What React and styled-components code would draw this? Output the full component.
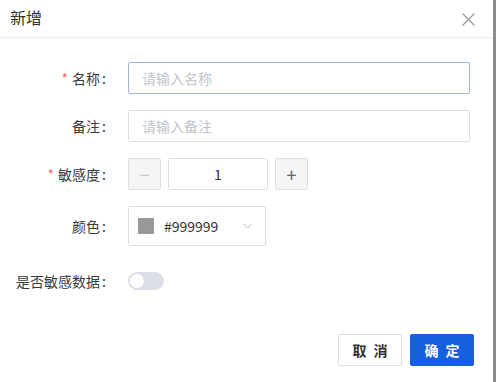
import React from "react";
import styled, { createGlobalStyle } from "styled-components";

const GlobalStyle = createGlobalStyle`
	html, body {
		margin: 0;
		padding: 0;
		background: #8c8c8c;
		font-family: "Noto Sans CJK SC", "Noto Sans", sans-serif;
	}
`;

const Dialog = styled.div`
	width: 493px;
	height: 382px;
	background: #fff;
	display: flex;
	flex-direction: column;
	box-sizing: border-box;
`;

const Header = styled.div`
	height: 38px;
	box-sizing: border-box;
	border-bottom: 1px solid #e8eaef;
	display: flex;
	align-items: center;
	justify-content: space-between;
	padding: 0 18px 0 10px;
`;

const Title = styled.div`
	font-size: 16px;
	color: #303133;
	line-height: 20px;
	margin-top: -4px;
`;

const Close = styled.svg`
	width: 13px;
	height: 13px;
	margin-top: 2px;
`;

const Body = styled.div`
	padding: 24px 23px 0 0;
	display: flex;
	flex-direction: column;
	gap: 16px;
`;

const Row = styled.div`
	display: flex;
	align-items: center;
	margin-top: ${(p) => p.$mt || 0}px;
`;

const Label = styled.label`
	width: 107px;
	flex: none;
	text-align: right;
	font-size: 14px;
	color: #3a3a3a;
	padding-right: 21px;
	white-space: nowrap;
	&::before {
		content: ${(p) => (p.$required ? '"*"' : '""')};
		color: #f56c6c;
		margin-right: 4px;
	}
	&::after {
		content: ":";
		margin-left: 2px;
		margin-right: 1px;
	}
`;

const TextInput = styled.div`
	flex: 1;
	height: 32px;
	box-sizing: border-box;
	border: 1px solid ${(p) => (p.$focus ? "#a3b7dd" : "#dcdfe6")};
	border-radius: 2px;
	display: flex;
	align-items: center;
	padding: 0 13px;
	font-size: 14px;
	color: #c0c4cc;
`;

const Stepper = styled.div`
	display: flex;
	gap: 7px;
`;

const StepButton = styled.div`
	width: 33px;
	height: 32px;
	box-sizing: border-box;
	border: 1px solid #dcdfe6;
	border-radius: 2px;
	background: #f5f5f5;
	display: flex;
	align-items: center;
	justify-content: center;
	color: ${(p) => (p.$disabled ? "#c8c8c8" : "#606266")};
	font-size: 18px;
`;

const NumberBox = styled.div`
	width: 100px;
	height: 32px;
	box-sizing: border-box;
	border: 1px solid #dcdfe6;
	border-radius: 2px;
	display: flex;
	align-items: center;
	justify-content: center;
	font-size: 14px;
	color: #303133;
`;

const ColorSelect = styled.div`
	width: 138px;
	height: 40px;
	box-sizing: border-box;
	border: 1px solid #dcdfe6;
	border-radius: 2px;
	display: flex;
	align-items: center;
	padding: 0 13px 0 9px;
	font-size: 14px;
	color: #303133;
`;

const Swatch = styled.span`
	width: 16px;
	height: 16px;
	background: ${(p) => p.$color};
	margin-right: 10px;
	flex: none;
`;

const Chevron = styled.svg`
	width: 9px;
	height: 6px;
	margin-left: auto;
`;

const Switch = styled.div`
	width: 36px;
	height: 18px;
	border-radius: 9px;
	background: #dcdfe6;
	position: relative;
	&::after {
		content: "";
		position: absolute;
		left: 2px;
		top: 2px;
		width: 14px;
		height: 14px;
		border-radius: 50%;
		background: #fff;
	}
`;

const Footer = styled.div`
	margin-top: auto;
	padding: 0 19px 16px 0;
	display: flex;
	justify-content: flex-end;
	gap: 8px;
`;

const Button = styled.button`
	width: 64px;
	height: 32px;
	box-sizing: border-box;
	border-radius: 2px;
	font-family: inherit;
	font-size: 14px;
	font-weight: 700;
	letter-spacing: 2px;
	padding: 0 0 0 2px;
	border: 1px solid ${(p) => (p.$primary ? "#1560dc" : "#dcdfe6")};
	background: ${(p) => (p.$primary ? "#1560dc" : "#fff")};
	color: ${(p) => (p.$primary ? "#fff" : "#303133")};
`;

export default function App() {
	return (
		<>
			<GlobalStyle />
			<Dialog>
				<Header>
					<Title>新增</Title>
					<Close viewBox="0 0 12 12">
						<path d="M0.5 0.5L11.5 11.5M11.5 0.5L0.5 11.5" stroke="#999" strokeWidth="1.1" fill="none" />
					</Close>
				</Header>
				<Body>
					<Row>
						<Label $required>名称</Label>
						<TextInput $focus>请输入名称</TextInput>
					</Row>
					<Row>
						<Label>备注</Label>
						<TextInput>请输入备注</TextInput>
					</Row>
					<Row>
						<Label $required>敏感度</Label>
						<Stepper>
							<StepButton $disabled>−</StepButton>
							<NumberBox>1</NumberBox>
							<StepButton>+</StepButton>
						</Stepper>
					</Row>
					<Row>
						<Label>颜色</Label>
						<ColorSelect>
							<Swatch $color="#999999" />
							#999999
							<Chevron viewBox="0 0 9 6">
								<path d="M0.5 1L4.5 5L8.5 1" stroke="#b0b4bc" strokeWidth="1" fill="none" />
							</Chevron>
						</ColorSelect>
					</Row>
					<Row $mt={9}>
						<Label>是否敏感数据</Label>
						<Switch />
					</Row>
				</Body>
				<Footer>
					<Button>取 消</Button>
					<Button $primary>确 定</Button>
				</Footer>
			</Dialog>
		</>
	);
}
